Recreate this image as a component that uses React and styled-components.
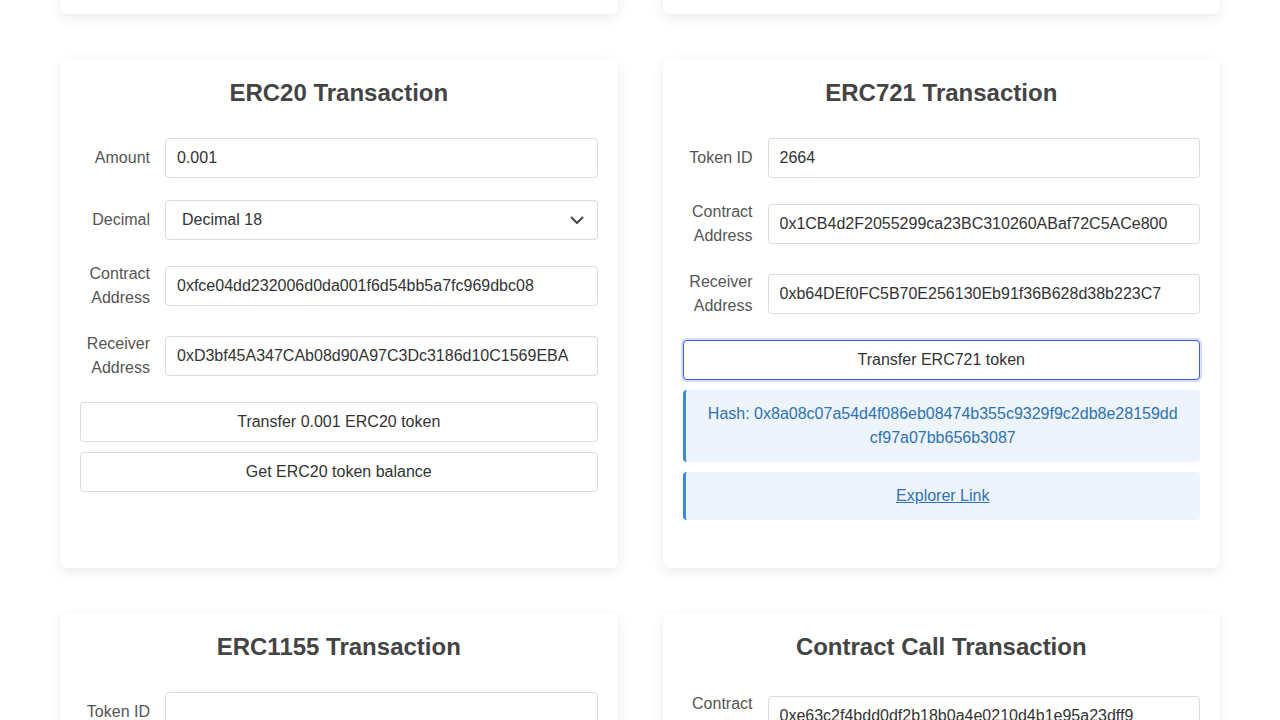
import React from 'react';
import styled, { createGlobalStyle } from 'styled-components';

const GlobalStyle = createGlobalStyle`
    body {
        margin: 0;
        background: #ffffff;
        font-family: 'Liberation Sans', Arial, sans-serif;
        color: #333;
        overflow: hidden;
    }
    * {
        box-sizing: border-box;
    }
`;

const Page = styled.div`
    width: 1160px;
    margin: -286px auto 0;
    display: grid;
    grid-template-columns: 1fr 1fr;
    column-gap: 45px;
    row-gap: 45px;
`;

const Card = styled.div`
    background: #fff;
    border-radius: 6px;
    box-shadow: 0 4px 14px rgba(0, 0, 0, 0.08), 0 0 2px rgba(0, 0, 0, 0.04);
    padding: 20px 20px 38px;
    height: ${(props) => props.$height || 'auto'};
`;

const Title = styled.h2`
    margin: 0 0 31px;
    text-align: center;
    font-size: 24px;
    line-height: 28px;
    font-weight: bold;
    color: #444;
`;

const Row = styled.div`
    display: grid;
    grid-template-columns: 70px 1fr;
    column-gap: 15px;
    align-items: center;
    margin-bottom: 22px;
`;

const Label = styled.label`
    text-align: right;
    font-size: 16px;
    line-height: 24px;
    color: #555;
`;

const Input = styled.input`
    width: 100%;
    height: 40px;
    border: 1px solid #dcdcdc;
    border-radius: 4px;
    padding: 0 11px;
    font-family: inherit;
    font-size: 16px;
    color: #333;
    background: #fff;
    outline: none;
`;

const SelectBox = styled.div`
    height: 40px;
    border: 1px solid #dcdcdc;
    border-radius: 4px;
    display: flex;
    align-items: center;
    justify-content: space-between;
    padding: 0 13px 0 16px;
    font-size: 16px;
    color: #333;
`;

const Button = styled.button`
    display: block;
    width: 100%;
    height: 40px;
    margin-bottom: 10px;
    background: #fff;
    border: 1px solid ${(props) => (props.$focused ? '#3d5fd9' : '#dcdcdc')};
    box-shadow: ${(props) =>
        props.$focused ? '0 0 0 2px rgba(61, 95, 217, 0.22)' : 'none'};
    border-radius: 4px;
    font-family: inherit;
    font-size: 16px;
    color: #333;
    cursor: pointer;
`;

const Alert = styled.div`
    background: #eef4fb;
    border-left: 3px solid #3a8ad6;
    border-radius: 4px;
    padding: 12px 20px;
    margin-bottom: 10px;
    text-align: center;
    font-size: 16px;
    line-height: 24px;
    color: #2d72b4;
    word-break: break-all;
`;

const AlertLink = styled.a`
    color: #2d72b4;
    text-decoration: underline;
`;

const Chevron = () => (
    <svg width="14" height="9" viewBox="0 0 14 9" fill="none">
        <path
            d="M1.5 1.5L7 7L12.5 1.5"
            stroke="#444"
            strokeWidth="2"
            strokeLinecap="round"
            strokeLinejoin="round"
        />
    </svg>
);

const Field = ({ label, value }) => (
    <Row>
        <Label>{label}</Label>
        <Input defaultValue={value} readOnly />
    </Row>
);

export default function App() {
    return (
        <>
            <GlobalStyle />
            <Page>
                <Card $height="300px" />
                <Card $height="300px" />

                <Card>
                    <Title>ERC20 Transaction</Title>
                    <Field label="Amount" value="0.001" />
                    <Row>
                        <Label>Decimal</Label>
                        <SelectBox>
                            <span>Decimal 18</span>
                            <Chevron />
                        </SelectBox>
                    </Row>
                    <Field
                        label="Contract Address"
                        value="0xfce04dd232006d0da001f6d54bb5a7fc969dbc08"
                    />
                    <Field
                        label="Receiver Address"
                        value="0xD3bf45A347CAb08d90A97C3Dc3186d10C1569EBA"
                    />
                    <Button>Transfer 0.001 ERC20 token</Button>
                    <Button>Get ERC20 token balance</Button>
                </Card>

                <Card>
                    <Title>ERC721 Transaction</Title>
                    <Field label="Token ID" value="2664" />
                    <Field
                        label="Contract Address"
                        value="0x1CB4d2F2055299ca23BC310260ABaf72C5ACe800"
                    />
                    <Field
                        label="Receiver Address"
                        value="0xb64DEf0FC5B70E256130Eb91f36B628d38b223C7"
                    />
                    <Button $focused>Transfer ERC721 token</Button>
                    <Alert>
                        Hash: 0x8a08c07a54d4f086eb08474b355c9329f9c2db8e28159ddcf97a07bb656b3087
                    </Alert>
                    <Alert>
                        <AlertLink href="#">Explorer Link</AlertLink>
                    </Alert>
                </Card>

                <Card>
                    <Title>ERC1155 Transaction</Title>
                    <Field label="Token ID" value="" />
                    <Field label="Amount" value="" />
                </Card>

                <Card>
                    <Title>Contract Call Transaction</Title>
                    <Field
                        label="Contract Address"
                        value="0xe63c2f4bdd0df2b18b0a4e0210d4b1e95a23dff9"
                    />
                </Card>
            </Page>
        </>
    );
}
